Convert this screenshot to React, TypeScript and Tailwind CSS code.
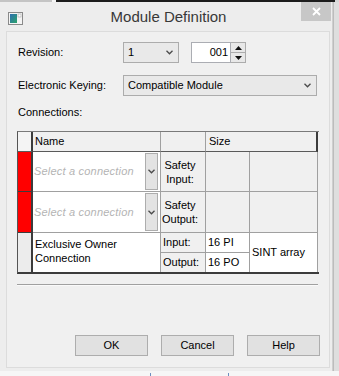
const font = { fontFamily: '"Liberation Sans", Arial, sans-serif' }

const Chevron = ({ className = "" }: { className?: string }) => (
  <svg width="7" height="5" viewBox="0 0 7 5" className={className}>
    <path d="M0.5 0.8 L3.5 3.8 L6.5 0.8" fill="none" stroke="#4a4a4a" strokeWidth="1.3" />
  </svg>
)

const AppIcon = () => (
  <svg width="15" height="13" viewBox="0 0 15 13">
    <rect x="0.5" y="0.5" width="14" height="12" fill="#f4f4f4" stroke="#8a8a8a" />
    <defs>
      <linearGradient id="g" x1="0" y1="0" x2="1" y2="1">
        <stop offset="0" stopColor="#2f6fb0" />
        <stop offset="1" stopColor="#2aa36a" />
      </linearGradient>
    </defs>
    <rect x="2" y="2" width="7" height="9" fill="url(#g)" />
    <rect x="10" y="2" width="3" height="3" fill="#ffffff" stroke="#9a9a9a" strokeWidth="0.5" />
  </svg>
)

const Combo = ({ text, width }: { text: string; width: string }) => (
  <div className={`${width} h-[21px] flex items-center justify-between pl-[4px] pr-[5px] border border-[#acacac] bg-[#e9e9e9] text-[11px] text-black`}>
    <span>{text}</span>
    <Chevron />
  </div>
)

const SelectCell = () => (
  <div className="bg-white border-r border-b border-[#a0a0a0] flex items-center relative pl-[1px]">
    <span className="italic text-[11px] text-[#b4b4b4] tracking-[0.2px]">Select a connection</span>
    <div className="absolute right-[2px] top-[1px] bottom-[1px] w-[13px] bg-[#e3e3e3] border border-[#adadad] flex items-center justify-center">
      <Chevron />
    </div>
  </div>
)

const SafetyCell = ({ label }: { label: string }) => (
  <div className="bg-[#f0f0f0] border-r border-b border-[#a0a0a0] flex items-center pl-[1px]">
    <div className="w-[36px] text-center text-[11px] leading-[14px]">
      Safety
      <br />
      {label}
    </div>
  </div>
)

const Gray = () => <div className="bg-[#f0f0f0] border-r border-b border-[#a0a0a0]" />

const Button = ({ text }: { text: string }) => (
  <div className="w-[73px] h-[21px] bg-[#e1e1e1] border border-[#adadad] flex items-center justify-center text-[11px] text-black">
    {text}
  </div>
)

export default function App() {
  return (
    <div className="w-[339px] h-[376px] bg-[#f2f2f2] flex flex-col overflow-hidden text-black" style={font}>
      <div className="flex h-[2px] shrink-0">
        <div className="w-[52px] bg-[#c4c4c4]" />
        <div className="w-[4px] bg-[#f4f4f4]" />
        <div className="w-[279px] bg-[#1c1c1c]" />
        <div className="flex-1 bg-[#d6d6d6]" />
      </div>
      <div className="flex flex-1">
        <div className="w-[333px] h-[369px] bg-[#ededed] border-r border-[#cfcfcf] flex flex-col">
          <div className="h-[29px] relative flex items-center shrink-0">
            <div className="pl-[8px] pt-[4px]">
              <AppIcon />
            </div>
            <div className="flex-1 text-center text-[15px] text-[#383838] pr-[18px] pt-[1px]">Module Definition</div>
            <div className="absolute right-[1px] top-0 w-[30px] h-[19px] bg-[#c7c7c7] flex items-center justify-center">
              <svg width="9" height="9" viewBox="0 0 9 9">
                <path d="M1 1 L8 8 M8 1 L1 8" stroke="#ffffff" strokeWidth="1.8" />
              </svg>
            </div>
          </div>

          <div className="ml-[6px] mr-[2px] h-[337px] bg-[#f0f0f0] border border-[#dcdcdc] flex flex-col pl-[10px] pr-[12px] pt-[10px]">
            <div className="flex items-center h-[21px]">
              <div className="w-[106px] pl-[1px] text-[11px]">Revision:</div>
              <Combo text="1" width="w-[56px]" />
              <div className="ml-[12px] flex h-[21px]">
                <div className="w-[40px] bg-white border border-[#abadb3] text-[11px] flex items-center justify-end pr-[2px]">001</div>
                <div className="w-[15px] flex flex-col border border-l-0 border-[#acacac] bg-[#e8e8e8]">
                  <div className="flex-1 flex items-center justify-center border-b border-[#acacac]">
                    <svg width="7" height="4" viewBox="0 0 7 4"><path d="M0 4 L3.5 0 L7 4 Z" fill="#111" /></svg>
                  </div>
                  <div className="flex-1 flex items-center justify-center">
                    <svg width="7" height="4" viewBox="0 0 7 4"><path d="M0 0 L3.5 4 L7 0 Z" fill="#111" /></svg>
                  </div>
                </div>
              </div>
            </div>

            <div className="flex items-center h-[21px] mt-[12px]">
              <div className="w-[106px] pl-[1px] text-[11px]">Electronic Keying:</div>
              <Combo text="Compatible Module" width="w-[194px]" />
            </div>

            <div className="mt-[10px] pl-[1px] text-[11px] leading-[13px] h-[13px]">Connections:</div>

            <div
              className="mt-[12px] grid w-[302px] border-l border-t border-b-2 border-l-[#555] border-t-[#7a7a7a] border-b-[#3c3c3c] text-[11px]"
              style={{ gridTemplateColumns: "15px 128px 45px 44px 68px", gridTemplateRows: "20px 40px 41px 20px 19px" }}
            >
              <div className="bg-[#f4f4f4] border-r-2 border-b border-r-[#3c3c3c] border-b-[#5a5a5a]" />
              <div className="bg-[#f0f0f0] border-r border-b border-r-[#a0a0a0] border-b-[#5a5a5a] flex items-center pl-[2px]">Name</div>
              <div className="bg-[#f0f0f0] border-r border-b border-r-[#a0a0a0] border-b-[#5a5a5a]" />
              <div className="col-span-2 bg-[#f0f0f0] border-r-2 border-b border-r-[#3c3c3c] border-b-[#5a5a5a] flex items-center pl-[3px]">Size</div>

              <div className="bg-[#ff0000] border-r-2 border-b border-[#3c3c3c]" />
              <SelectCell />
              <SafetyCell label="Input:" />
              <Gray />
              <Gray />

              <div className="bg-[#ff0000] border-r-2 border-b border-[#3c3c3c]" />
              <SelectCell />
              <SafetyCell label="Output:" />
              <Gray />
              <Gray />

              <div className="row-span-2 bg-[#ececec] border-r-2 border-r-[#3c3c3c]" />
              <div className="row-span-2 bg-white border-r border-[#a0a0a0] pl-[2px] pt-[4px] leading-[14px]">
                Exclusive Owner
                <br />
                Connection
              </div>
              <div className="bg-[#f0f0f0] border-r border-b border-[#a0a0a0] flex items-center pl-[2px]">Input:</div>
              <div className="bg-white border-r border-b border-[#a0a0a0] flex items-center pl-[2px]">16 PI</div>
              <div className="row-span-2 bg-white border-r border-[#a0a0a0] flex items-center pl-[2px]">SINT array</div>
              <div className="bg-[#f0f0f0] border-r border-[#a0a0a0] flex items-center pl-[2px]">Output:</div>
              <div className="bg-white border-r border-[#a0a0a0] flex items-center pl-[2px]">16 PO</div>
            </div>

            <div className="mt-[10px] w-[301px] h-[2px] border-t border-b border-t-[#a0a0a0] border-b-[#fafafa]" />

            <div className="mt-[49px] flex justify-end gap-[13px] pr-[0px] w-[303px]">
              <Button text="OK" />
              <Button text="Cancel" />
              <Button text="Help" />
            </div>
          </div>
        </div>
        <div className="flex-1 bg-[#dedede] border-l border-[#bcbcbc]" />
      </div>
      <div className="h-[5px] shrink-0 bg-[#f6f6f6] relative">
        <div className="absolute left-[150px] top-[2px] w-px h-[3px] bg-[#6d8fc0]" />
        <div className="absolute left-[228px] top-[2px] w-px h-[3px] bg-[#6d8fc0]" />
      </div>
    </div>
  )
}
